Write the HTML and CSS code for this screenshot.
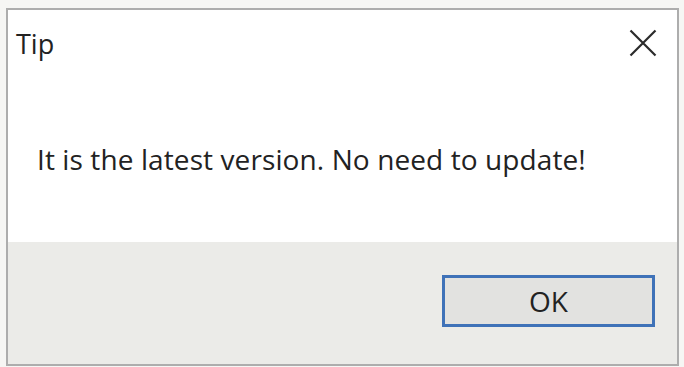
FILE: index.html
```html
<!DOCTYPE html>
<html lang="en">
<head>
<meta charset="utf-8">
<title>Tip</title>
<link rel="stylesheet" href="styles.css">
</head>
<body>
<div class="dialog">
  <div class="titlebar">
    <span class="title">Tip</span>
    <button class="close" aria-label="Close">
      <svg width="28" height="28" viewBox="0 0 28 28"><path d="M1.5 1.5 L26.5 26.5 M26.5 1.5 L1.5 26.5" stroke="#2b2b2b" stroke-width="2.2" fill="none"/></svg>
    </button>
  </div>
  <div class="content">
    <p class="message">It is the latest version. No need to update!</p>
  </div>
  <div class="footer">
    <button class="ok">OK</button>
  </div>
</div>
</body>
</html>
```
FILE: styles.css
```css
html, body {
  margin: 0;
  background: #f6f6f4;
}
body {
  padding: 8px 5px 1px 6px;
  font-family: "Open Sans", "Noto Sans", sans-serif;
  color: #222222;
}
.dialog {
  width: 673px;
  height: 358px;
  box-sizing: border-box;
  border: 2px solid #adadad;
  background: #ffffff;
  display: flex;
  flex-direction: column;
}
.titlebar {
  height: 66px;
  display: flex;
  align-items: center;
  justify-content: space-between;
  padding: 0 20px 0 8px;
}
.title {
  font-size: 27px;
  line-height: 1;
}
.close {
  border: none;
  background: none;
  padding: 0;
  width: 28px;
  height: 28px;
  display: flex;
}
.content {
  flex: 0 0 166px;
  box-sizing: border-box;
  padding: 0 0 0 29px;
  display: flex;
  align-items: center;
}
.message {
  margin: 0;
  font-size: 28px;
  line-height: 1;
  letter-spacing: 0.1px;
}
.footer {
  flex: 1;
  background: #ebebe8;
  display: flex;
  justify-content: flex-end;
  align-items: flex-start;
  padding: 33px 22px 0 0;
}
.ok {
  width: 213px;
  height: 52px;
  box-sizing: border-box;
  border: 3px solid #3f72b8;
  background: #e2e2e0;
  font-family: "Open Sans", "Noto Sans", sans-serif;
  font-size: 28px;
  color: #222222;
  padding: 0;
}
```
